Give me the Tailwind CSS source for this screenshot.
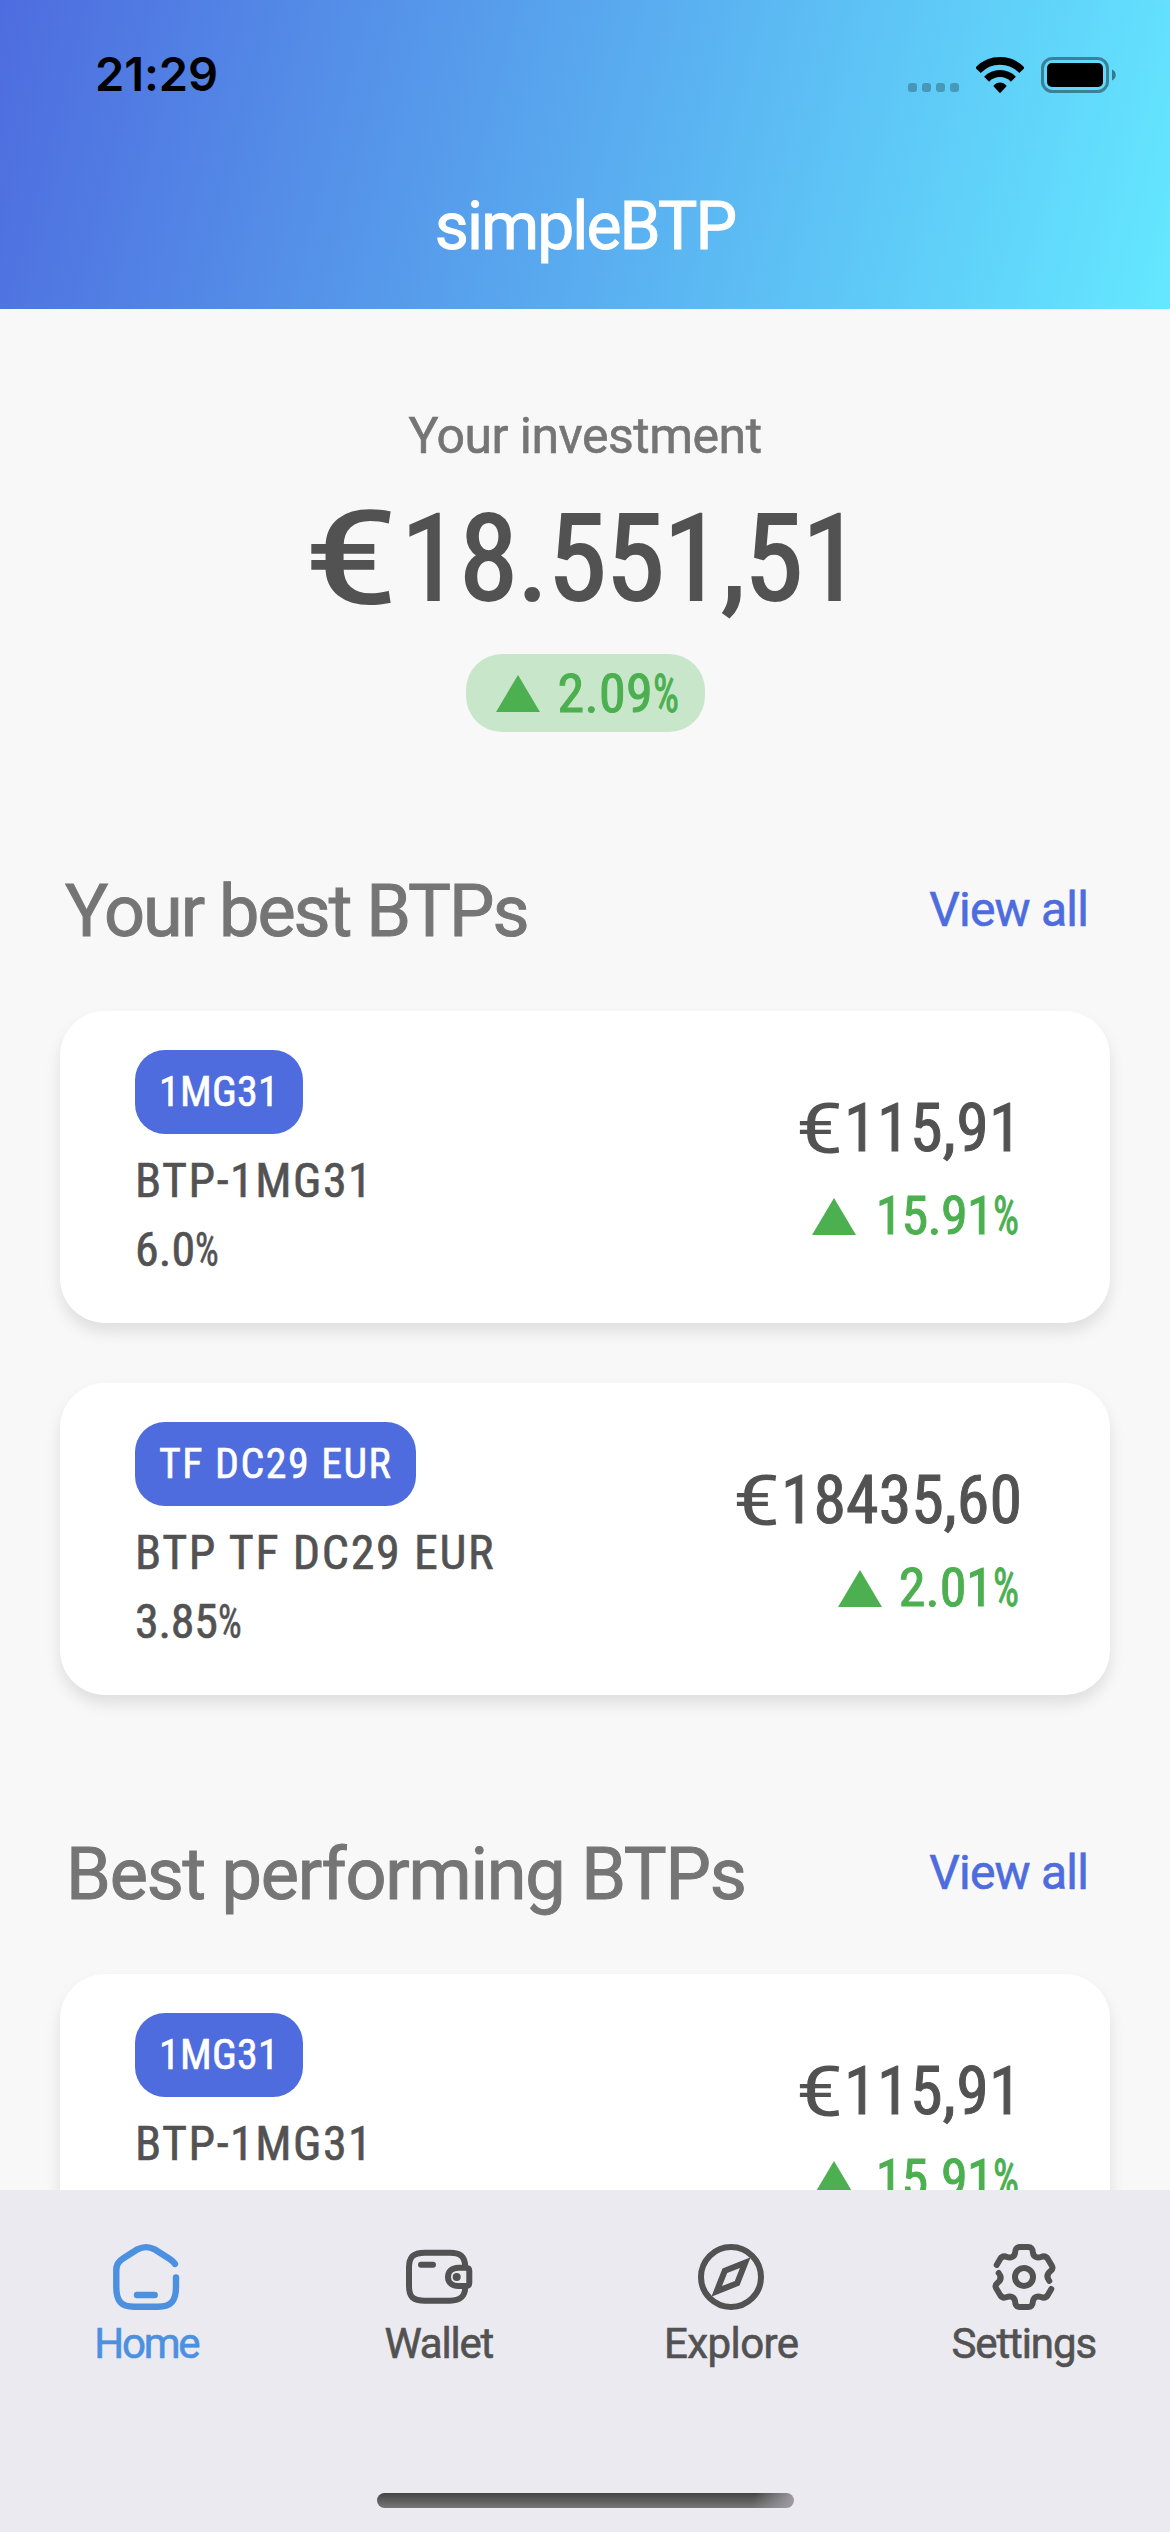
<!DOCTYPE html>
<html lang="en">
<head>
<meta charset="utf-8">
<title>simpleBTP</title>
<script src="https://cdn.jsdelivr.net/npm/@tailwindcss/browser@4"></script>
</head>
<body class="flex h-[2532px] w-[1170px] flex-col overflow-hidden bg-[#f8f8f8] font-[Roboto,sans-serif] text-[#525252] font-stretch-75% whitespace-nowrap [-webkit-text-stroke:0.6px]">

<header class="flex h-[309px] shrink-0 flex-col bg-[linear-gradient(104.8deg,#4e6cdf,#64e8ff)]">
  <div class="flex h-[149px] items-center justify-between pr-[54px] pl-[95px]">
    <span class="font-[Inter,sans-serif] text-[47px] font-semibold tracking-[-0.1px] text-black font-stretch-100% [-webkit-text-stroke:0]">21:29</span>
    <div class="flex items-center">
      <div class="mt-[25px] mr-[17px] flex gap-[5px]">
        <i class="size-[9px] rounded-[3px] bg-black/25"></i><i class="size-[9px] rounded-[3px] bg-black/25"></i><i class="size-[9px] rounded-[3px] bg-black/25"></i><i class="size-[9px] rounded-[3px] bg-black/25"></i>
      </div>
      <svg class="mr-[17px] h-[36px] w-[48px]" viewBox="0 0 48 36" fill="none" stroke="#000">
        <path d="M2 13.4A30.2 30.2 0 0 1 46 13.4" stroke-width="7.6"/>
        <path d="M10.6 22.2A18.8 18.8 0 0 1 37.4 22.2" stroke-width="7"/>
        <path d="M17.3 29C21 24.4 27 24.4 30.7 29L25 35.3Q24 36.3 23 35.3Z" fill="#000" stroke="none"/>
      </svg>
      <svg class="h-[36px] w-[75px]" viewBox="0 0 75 36">
        <rect x="1.5" y="1.5" width="65" height="33" rx="10" fill="none" stroke="#000" stroke-opacity=".4" stroke-width="3"/>
        <rect x="6" y="6" width="56" height="24" rx="5"/>
        <path d="M71 12.5C76 14.5 76 21.5 71 23.5Z" fill-opacity=".45"/>
      </svg>
    </div>
  </div>
  <h1 class="text-center text-[66px] leading-[156px] tracking-[-1.9px] text-white font-stretch-100% [-webkit-text-stroke:1px]">simpleBTP</h1>
</header>

<main class="h-[1881px] shrink-0 overflow-hidden">
  <section class="flex flex-col items-center pt-[97px]">
    <p class="text-[50px] leading-[60px] tracking-[-0.5px] text-[#757575] font-stretch-100%">Your investment</p>
    <div class="mt-[33px] mr-[5px] flex h-[120px] text-[120px] leading-[120px] [-webkit-text-stroke:2px]">
      <span class="w-[96px]"><span class="inline-block origin-left scale-x-[1.28] text-[128px] font-stretch-100%">€</span></span>
      <span class="tracking-[-1.2px]">18.551,51</span>
    </div>
    <div class="mt-[35px] flex h-[78px] w-[239px] items-center rounded-[36px] bg-[#c8e6c9] pl-[30px] text-[54px] text-[#4caf50] [-webkit-text-stroke:1px]">
      <svg class="mr-[18px] h-[37px] w-[44px]" viewBox="0 0 44 37" fill="#4caf50"><path d="M22 0L44 37H0Z"/></svg>
      <span class="tracking-[0.3px]">2.09</span><span class="w-[26px]"><span class="inline-block origin-left scale-x-[0.76]">%</span></span>
    </div>
  </section>

  <section>
    <div class="mt-[139px] flex h-[140px] items-start justify-between pr-[82px] pl-[65px]">
      <h2 class="pt-px text-[72px] leading-[80px] tracking-[-2px] text-[#757575] font-stretch-100% [-webkit-text-stroke:1px]">Your best BTPs</h2>
      <a class="text-[48px] leading-[77px] tracking-[-0.8px] text-[#4d6cdd] font-stretch-100%">View all</a>
    </div>
    <div class="mx-[60px] flex flex-col gap-[60px]">
      <article class="flex h-[312px] justify-between rounded-[45px] bg-white pr-[88px] pl-[75px] shadow-[0_9px_15px_rgba(0,0,0,0.1)]">
        <div class="flex flex-col items-start pt-[39px] text-[48px] leading-[69px]">
          <span class="mb-[12px] rounded-[30px] bg-[#4e6cdd] px-6 text-[42px] leading-[84px] tracking-[0.25px] text-white">1MG31</span>
          <span class="tracking-[1.5px]">BTP-1MG31</span>
          <span class="flex"><span class="tracking-[0.1px]">6.0</span><span class="w-6"><span class="inline-block origin-left scale-x-[0.78]">%</span></span></span>
        </div>
        <div class="flex flex-col items-end pt-[74px]">
          <div class="flex h-[87px] text-[66px] leading-[88px] [-webkit-text-stroke:1px]"><span class="w-[48px]"><span class="inline-block origin-left scale-x-[1.2] text-[70px] font-stretch-100% [-webkit-text-stroke:0]">€</span></span><span class="tracking-[0.34px]">115,91</span></div>
          <div class="mr-[3px] flex h-[88px] items-center text-[54px] leading-[88px] text-[#4caf50] [-webkit-text-stroke:1px]">
            <svg class="mr-[20px] h-[37px] w-[44px]" viewBox="0 0 44 37" fill="#4caf50"><path d="M22 0L44 37H0Z"/></svg>
            <span class="tracking-[-0.7px]">15.91</span><span class="w-[26px]"><span class="inline-block origin-left scale-x-[0.76]">%</span></span>
          </div>
        </div>
      </article>
      <article class="flex h-[312px] justify-between rounded-[45px] bg-white pr-[88px] pl-[75px] shadow-[0_9px_15px_rgba(0,0,0,0.1)]">
        <div class="flex flex-col items-start pt-[39px] text-[48px] leading-[69px]">
          <span class="mb-[12px] rounded-[30px] bg-[#4e6cdd] px-6 text-[42px] leading-[84px] tracking-[1.45px] text-white">TF DC29 EUR</span>
          <span class="tracking-[1.64px]">BTP TF DC29 EUR</span>
          <span class="flex"><span class="tracking-[-0.3px]">3.85</span><span class="w-6"><span class="inline-block origin-left scale-x-[0.78]">%</span></span></span>
        </div>
        <div class="flex flex-col items-end pt-[74px]">
          <div class="flex h-[87px] text-[66px] leading-[88px] [-webkit-text-stroke:1px]"><span class="w-[48px]"><span class="inline-block origin-left scale-x-[1.2] text-[70px] font-stretch-100% [-webkit-text-stroke:0]">€</span></span><span>18435,60</span></div>
          <div class="mr-[3px] flex h-[88px] items-center text-[54px] leading-[88px] text-[#4caf50] [-webkit-text-stroke:1px]">
            <svg class="mr-[17px] h-[37px] w-[44px]" viewBox="0 0 44 37" fill="#4caf50"><path d="M22 0L44 37H0Z"/></svg>
            <span>2.01</span><span class="w-[26px]"><span class="inline-block origin-left scale-x-[0.76]">%</span></span>
          </div>
        </div>
      </article>
    </div>
  </section>

  <section>
    <div class="mt-[139px] flex h-[140px] items-start justify-between pr-[82px] pl-[66px]">
      <h2 class="pt-px text-[72px] leading-[80px] tracking-[-1.2px] text-[#757575] font-stretch-100% [-webkit-text-stroke:1px]">Best performing BTPs</h2>
      <a class="text-[48px] leading-[77px] tracking-[-0.8px] text-[#4d6cdd] font-stretch-100%">View all</a>
    </div>
    <div class="mx-[60px]">
      <article class="flex h-[312px] justify-between rounded-[45px] bg-white pr-[88px] pl-[75px] shadow-[0_9px_15px_rgba(0,0,0,0.1)]">
        <div class="flex flex-col items-start pt-[39px] text-[48px] leading-[69px]">
          <span class="mb-[12px] rounded-[30px] bg-[#4e6cdd] px-6 text-[42px] leading-[84px] tracking-[0.25px] text-white">1MG31</span>
          <span class="tracking-[1.5px]">BTP-1MG31</span>
        </div>
        <div class="flex flex-col items-end pt-[74px]">
          <div class="flex h-[87px] text-[66px] leading-[88px] [-webkit-text-stroke:1px]"><span class="w-[48px]"><span class="inline-block origin-left scale-x-[1.2] text-[70px] font-stretch-100% [-webkit-text-stroke:0]">€</span></span><span class="tracking-[0.34px]">115,91</span></div>
          <div class="mr-[3px] flex h-[88px] items-center text-[54px] leading-[88px] text-[#4caf50] [-webkit-text-stroke:1px]">
            <svg class="mr-[20px] h-[37px] w-[44px]" viewBox="0 0 44 37" fill="#4caf50"><path d="M22 0L44 37H0Z"/></svg>
            <span class="tracking-[-0.7px]">15.91</span><span class="w-[26px]"><span class="inline-block origin-left scale-x-[0.76]">%</span></span>
          </div>
        </div>
      </article>
    </div>
  </section>
</main>

<nav class="flex h-[342px] shrink-0 flex-col items-center bg-[#ebeaf0]">
  <div class="grid w-full grid-cols-4 pt-[51px] text-center text-[42px] leading-[61px] font-stretch-100%">
    <a class="flex flex-col items-center text-[#4c90e0]">
      <svg class="size-[72px]" viewBox="0 0 72 72" fill="none" stroke="currentColor" stroke-width="6.4" stroke-linecap="round" stroke-linejoin="round"><path d="M65 23C63.500 20.500 61 18.800 59 17.500L44.500 8.300C38.500 5.200 33.500 5.200 27.500 8.300L13 17.500C8 20.500 6.300 24 6.300 29V46C6.300 60 11 65.700 24 65.700H48C61 65.700 66 60 66 46V36.500M27 54H44.700"/></svg>
      <span class="tracking-[-2.2px]">Home</span>
    </a>
    <a class="flex flex-col items-center">
      <svg class="size-[72px]" viewBox="0 0 72 72" fill="none" stroke="currentColor" stroke-width="6" stroke-linecap="round" stroke-linejoin="round"><path d="M62.300 26C62 15 57 11.700 47 11.700H22C10 11.700 6 16 6 27V45C6 56 10 59.700 22 59.700H47C57 59.700 62 56 62.300 46M18 23.700H30M62.500 26.700H55.500C48.500 26.700 45 31 45 36S48.500 45 55.500 45H62.500C65 45 66.300 44 66.300 42V30C66.300 28 65 26.700 62.500 26.700Z"/><circle cx="53.700" cy="36" r="4" fill="currentColor" stroke="none"/></svg>
      <span class="tracking-[-1.2px]">Wallet</span>
    </a>
    <a class="flex flex-col items-center">
      <svg class="size-[72px]" viewBox="0 0 72 72" fill="none" stroke="currentColor" stroke-width="6"><circle cx="36" cy="36" r="30"/><path stroke-miterlimit="8" d="M29.800 29.800L50.300 21.700L42.200 42.200L21.700 50.300Z"/></svg>
      <span class="tracking-[-0.55px]">Explore</span>
    </a>
    <a class="flex flex-col items-center">
      <svg class="size-[72px]" viewBox="0 0 72 72" fill="none" stroke="currentColor" stroke-width="6" stroke-linecap="round" stroke-linejoin="round"><circle cx="36" cy="36" r="9"/><path id="cog" d="M8.700 24L12.300 17.800C14 15.300 16.500 15 19 16C23 17.500 26.500 15.500 27 12C27.300 8 28.500 6 32 6H40C43.500 6 44.700 8 45 12C45.500 15.500 49 17.500 53 16C55.500 15 58 15.300 59.700 17.800L64 25C65 27 64.500 28.500 62.500 30C59 33 58.500 36.500 61.300 40"/><use href="#cog" transform="rotate(180 36 36)"/></svg>
      <span class="tracking-[-1.1px]">Settings</span>
    </a>
  </div>
  <div class="mt-[119px] h-[15px] w-[417px] rounded-full bg-[linear-gradient(100deg,transparent_90%,#a09ea4_100%),linear-gradient(#444,#777)]"></div>
</nav>
</body>
</html>
